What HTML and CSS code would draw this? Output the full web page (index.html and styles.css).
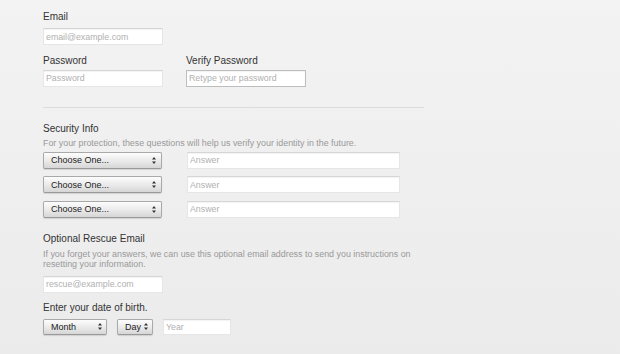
FILE: index.html
```html
<!DOCTYPE html>
<html lang="en">
<head>
    <meta charset="UTF-8">
    <meta name="viewport" content="width=device-width, initial-scale=1.0">
    <title>Create Account</title>
    <link rel="stylesheet" href="styles.css">
</head>
<body>
    <form class="account-form">
        <div class="field">
            <label class="label">Email</label>
            <input class="text-input" type="text" placeholder="email@example.com">
        </div>

        <div class="field-row">
            <div class="field">
                <label class="label">Password</label>
                <input class="text-input" type="password" placeholder="Password">
            </div>
            <div class="field">
                <label class="label">Verify Password</label>
                <input class="text-input verify" type="password" placeholder="Retype your password">
            </div>
        </div>

        <hr class="divider">

        <div class="section security">
            <div class="label">Security Info</div>
            <p class="hint">For your protection, these questions will help us verify your identity in the future.</p>
            <div class="question-list">
                <div class="question">
                    <span class="select wide">
                        <select><option>Choose One...</option></select>
                        <svg class="arrows" width="4" height="7" viewBox="0 0 4 7"><path d="M2 0 L4 2.6 H0 Z M2 7 L4 4.4 H0 Z" fill="#333"/></svg>
                    </span>
                    <input class="text-input answer" type="text" placeholder="Answer">
                </div>
                <div class="question">
                    <span class="select wide">
                        <select><option>Choose One...</option></select>
                        <svg class="arrows" width="4" height="7" viewBox="0 0 4 7"><path d="M2 0 L4 2.6 H0 Z M2 7 L4 4.4 H0 Z" fill="#333"/></svg>
                    </span>
                    <input class="text-input answer" type="text" placeholder="Answer">
                </div>
                <div class="question">
                    <span class="select wide">
                        <select><option>Choose One...</option></select>
                        <svg class="arrows" width="4" height="7" viewBox="0 0 4 7"><path d="M2 0 L4 2.6 H0 Z M2 7 L4 4.4 H0 Z" fill="#333"/></svg>
                    </span>
                    <input class="text-input answer" type="text" placeholder="Answer">
                </div>
            </div>
        </div>

        <div class="section rescue">
            <div class="label">Optional Rescue Email</div>
            <p class="hint">If you forget your answers, we can use this optional email address to send you instructions on resetting your information.</p>
            <input class="text-input" type="text" placeholder="rescue@example.com">
        </div>

        <div class="section birth">
            <div class="label">Enter your date of birth.</div>
            <div class="birth-row">
                <span class="select month">
                    <select><option>Month</option></select>
                    <svg class="arrows" width="4" height="7" viewBox="0 0 4 7"><path d="M2 0 L4 2.6 H0 Z M2 7 L4 4.4 H0 Z" fill="#333"/></svg>
                </span>
                <span class="select day">
                    <select><option>Day</option></select>
                    <svg class="arrows" width="4" height="7" viewBox="0 0 4 7"><path d="M2 0 L4 2.6 H0 Z M2 7 L4 4.4 H0 Z" fill="#333"/></svg>
                </span>
                <input class="text-input year" type="text" placeholder="Year">
            </div>
        </div>
    </form>
</body>
</html>
```

FILE: styles.css
```css
html, body {
    height: 100%;
}
body {
    margin: 0;
    font-family: "Liberation Sans", Arial, sans-serif;
    color: #333;
    background: linear-gradient(#f3f3f3, #ebebeb);
}
.account-form {
    padding: 11px 0 0 43px;
    width: 381px;
}
.field {
    display: flex;
    flex-direction: column;
}
.label {
    display: block;
    font-size: 10px;
    line-height: 12px;
    color: #333;
}
.field .label {
    margin-bottom: 5px;
}
.field-row {
    display: flex;
    gap: 23px;
    margin-top: 10px;
}
.field-row .label {
    margin-bottom: 2.5px;
}
.text-input {
    box-sizing: border-box;
    width: 120px;
    height: 17px;
    margin: 0;
    padding: 0 2px;
    border: 1px solid #e6e6e6;
    border-top-color: #d6d6d6;
    border-radius: 0;
    background: #fff;
    box-shadow: inset 0 1px 1px rgba(0,0,0,0.05);
    font-family: inherit;
    font-size: 8.8px;
    color: #333;
    outline: none;
}
.text-input::placeholder {
    color: #b0b0b0;
}
.text-input.verify {
    border: 1px solid #bdbdbd;
}
.divider {
    margin: 20px 0 0;
    border: 0;
    border-top: 1px solid #dcdcdc;
    height: 0;
}
.security {
    margin-top: 15px;
}
.hint {
    margin: 3.5px 0 0;
    font-size: 8.9px;
    line-height: 10.5px;
    color: #999;
}
.question-list {
    display: flex;
    flex-direction: column;
    gap: 7.5px;
    margin-top: 3px;
}
.question {
    display: flex;
    align-items: center;
    gap: 25px;
}
.text-input.answer {
    width: 213px;
}
.select {
    position: relative;
    display: flex;
}
.select select {
    appearance: none;
    -webkit-appearance: none;
    box-sizing: border-box;
    height: 17px;
    margin: 0;
    padding: 0 0 0 7px;
    border: 1px solid #a9a9a9;
    border-bottom-color: #999;
    border-radius: 2px;
    background: linear-gradient(#fdfdfd, #e9e9e9 55%, #d6d6d6);
    box-shadow: 0 1px 1px rgba(0,0,0,0.12);
    font-family: inherit;
    font-size: 9px;
    color: #222;
    outline: none;
}
.select .arrows {
    position: absolute;
    right: 6px;
    top: 5px;
    pointer-events: none;
}
.select.wide select {
    width: 119px;
}
.rescue {
    margin-top: 15.5px;
}
.rescue .text-input {
    margin-top: 6px;
}
.birth {
    margin-top: 9.5px;
}
.birth-row {
    display: flex;
    align-items: center;
    margin-top: 4.5px;
    gap: 10px;
}
.select.month select {
    width: 64px;
    height: 16px;
}
.select.day select {
    width: 36px;
    height: 16px;
}
.select.month .arrows,
.select.day .arrows {
    top: 4.5px;
    right: 5px;
}
.text-input.year {
    width: 68px;
    height: 16px;
}
```
